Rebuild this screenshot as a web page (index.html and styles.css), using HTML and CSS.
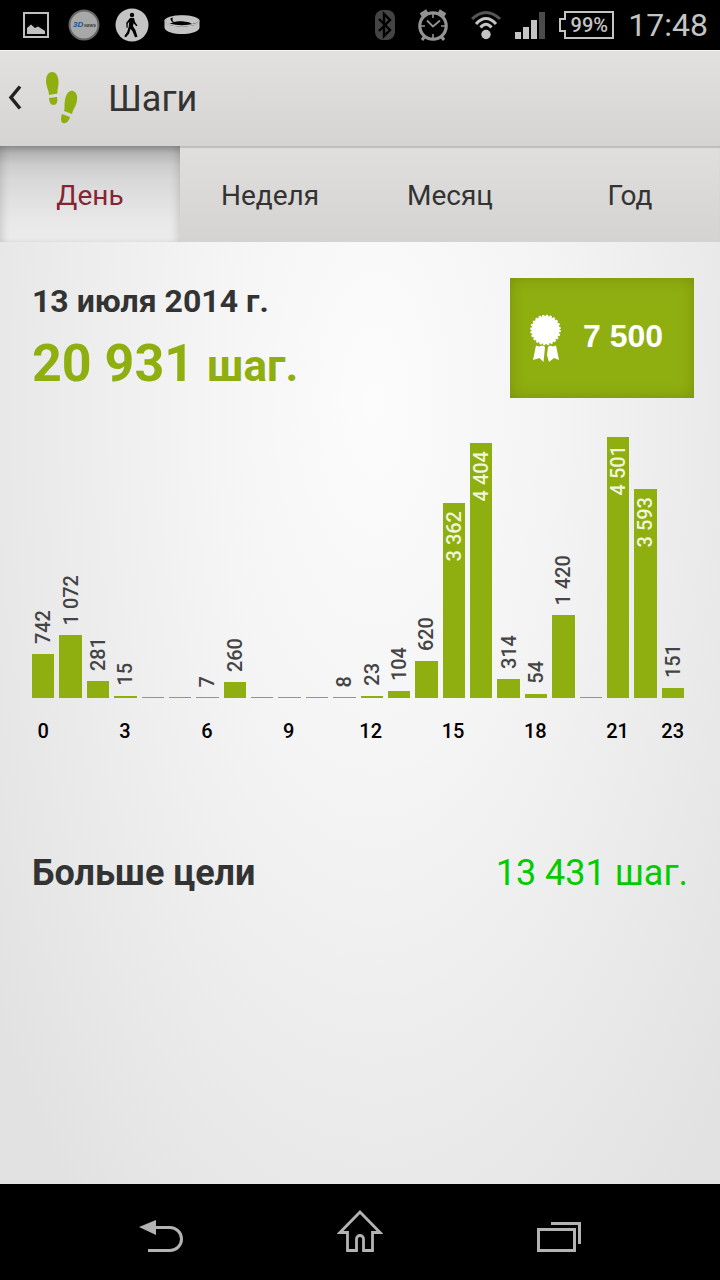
FILE: index.html
```html
<!DOCTYPE html>
<html lang="ru">
<head>
    <meta charset="UTF-8" />
    <meta name="viewport" content="width=device-width, initial-scale=1.0" />
    <title>Шаги</title>
    <link rel="stylesheet" href="styles.css">
</head>
<body>
    <div class="status-bar">
        <div class="status-group notifications">
            <svg width="26" height="26" viewBox="0 0 26 26">
                <rect x="1" y="1" width="24" height="24" fill="none" stroke="#c0c0c0" stroke-width="2" />
                <path d="M4 22v-6l4-3.500 4 3.500 3-1.500 4 2.500 3 2v3z" fill="#c0c0c0" />
            </svg>
            <svg width="32" height="32" viewBox="0 0 32 32">
                <circle cx="16" cy="16" r="14.500" fill="#a8a8a8" stroke="#666" stroke-width="2" />
                <text x="5" y="18" class="logo-3d">3D</text>
                <text x="16" y="18" class="logo-news">NEWS</text>
            </svg>
            <svg width="34" height="34" viewBox="0 0 34 34">
                <circle cx="17" cy="17" r="16.500" fill="#c4c4c4" />
                <circle cx="17" cy="7" r="2.200" />
                <path d="M15 10h4l1 4 2.500 3.500-1 .8-3-3-.5 3 2.500 4 2 6.500-2.500.5-2.500-6-2-2.500-1.500 5-3 3.500-1.800-1 3-4.500 1.500-5 .5-5-1.500 2v4h-1.200l-.2-5z" />
            </svg>
            <svg width="36" height="20" viewBox="0 0 36 20">
                <path d="M.5 7C5 13 31 13 35.500 7v6c-3 8-32 8-35 0z" fill="#c4c4c4" />
                <ellipse cx="18" cy="6" rx="17" ry="5" fill="none" stroke="#c4c4c4" stroke-width="1.500" />
                <path d="M10 1.500C17 0 34 1 34.500 6 34 7.500 31 8.500 28 9 25 6 14 5.500 10 7 8 6 8 3 10 1.500zM7 2C1 4 0 7 5 9l4-1.500C6.500 6 6 4 7 2z" fill="#c4c4c4" />
            </svg>
        </div>
        <div class="status-group indicators">
            <svg width="20" height="30" viewBox="0 0 20 30">
                <rect width="20" height="30" rx="8" fill="#444" />
                <path d="M4 9l11 11-6 6V4l6 6L4 21" fill="none" stroke="#000" stroke-width="2.400" />
            </svg>
            <svg width="30" height="32" viewBox="0 0 30 32" fill="none" stroke="#939393">
                <circle cx="15" cy="17" r="13.200" stroke-width="3.200" />
                <path d="M9 11.500l6 6 7-6" stroke-width="1.800" />
                <path d="M15 5v4M15 25v4M3 17h4M23 17h4" stroke-width="1.600" />
                <path d="M3 6.500l6.500-4M20.500 2.500l6.500 4" stroke-width="5" />
                <path d="M7 27l-3 4M23 27l3 4" stroke-width="3" />
            </svg>
            <svg width="30" height="30" viewBox="0 0 30 30" fill="none" stroke-width="3">
                <path d="M1 9Q15-4 29 9" stroke="#555" />
                <path d="M5 14Q15 3 25 14M9.500 17.500Q15 11 20.500 17.500" stroke="#c4c4c4" />
                <circle cx="15" cy="24.500" r="4.700" fill="#c4c4c4" />
            </svg>
            <svg width="30" height="28" viewBox="0 0 30 28">
                <path d="M0 21h6v7H0zM8 16h6v12H8zM16 9h6v19h-6z" fill="#c4c4c4" />
                <path d="M24 1h6v27h-6z" fill="#4b4b4b" />
            </svg>
            <div class="battery">
                <svg width="55" height="28" viewBox="0 0 55 28">
                    <path d="M6 1h48v26H6v-7H1V8h5z" fill="none" stroke="#c4c4c4" stroke-width="2" />
                </svg>
                <span>99%</span>
            </div>
            <span class="clock">17:48</span>
        </div>
    </div>

    <header class="header">
        <a href="#" class="back-link" aria-label="Назад">
            <svg width="14" height="28" viewBox="0 0 14 28">
                <path d="M12 1.500L3 12.500l9 11" fill="none" stroke="#222" stroke-width="3.500" />
            </svg>
            <svg width="34" height="54" viewBox="0 0 34 54" fill="#8fae10">
                <path d="M7 0c5 0 7 6 6.500 12-.3 4-1.500 7-1 9.500L4 23C4 18 1 15 1 9 1 4 3 0 7 0z" />
                <path d="M4 26l8-1c1 4 0 8-3.500 8S4.500 30 4 26z" />
                <path d="M28 19c4 1 5 6 3.500 12-1 4-4 7-4.500 11l-8-3c1-3 0-6 1-11 1-6 4-10 8-9z" />
                <path d="M17 42l8 3c-1 4-4 7-7 6s-2-6-1-9z" />
            </svg>
        </a>
        <h1>Шаги</h1>
    </header>

    <nav class="tabs">
        <button class="tab active">День</button>
        <button class="tab">Неделя</button>
        <button class="tab">Месяц</button>
        <button class="tab">Год</button>
    </nav>

    <main class="content">
        <section class="summary">
            <div>
                <h2 class="date">13 июля 2014 г.</h2>
                <p class="total">20 931 <span>шаг.</span></p>
            </div>
            <div class="goal">
                <svg width="32" height="50" viewBox="0 0 32 50" fill="#fff">
                    <circle cx="15.500" cy="17" r="14" />
                    <circle cx="15.500" cy="17" r="14.300" fill="none" stroke="#fff" stroke-width="2" stroke-dasharray="2.200 1.543" />
                    <path d="M6 32.500l3 1 4-1 2 1.500-1.500 15-4-4-6.500 2z" />
                    <path d="M18 34l2-1.500 3 1 3-1 3 14.500-5-2-5 4-2-7z" />
                </svg>
                <span>7 500</span>
            </div>
        </section>

        <section class="chart">
            <div class="bars"></div>
            <div class="axis"></div>
        </section>

        <section class="result">
            <h2>Больше цели</h2>
            <span class="over">13 431 шаг.</span>
        </section>
    </main>

    <footer class="nav-bar">
        <button aria-label="Назад">
            <svg width="44" height="44" viewBox="0 0 44 44">
                <path d="M16 17.500h15a11.500 11.500 0 0 1 0 23H9" fill="none" stroke="#b3b3b3" stroke-width="3" />
                <path d="M0 17L17 10v15z" fill="#b3b3b3" />
            </svg>
        </button>
        <button aria-label="Домой">
            <svg width="46" height="44" viewBox="0 0 46 44">
                <path d="M23 2L3 22.500h7.500v18H19.500V29a3.500 3.500 0 0 1 7 0v11.500h9v-18H43z" fill="none" stroke="#b3b3b3" stroke-width="2.800" />
            </svg>
        </button>
        <button aria-label="Недавние">
            <svg width="44" height="44" viewBox="0 0 44 44" fill="none" stroke="#b3b3b3" stroke-width="3">
                <path d="M1.500 19.500h36v21h-36zM14 13.500h28.500V34" />
            </svg>
        </button>
    </footer>

    <script>
        const steps = [742, 1072, 281, 15, 0, 0, 7, 260, 0, 0, 0, 8, 23, 104, 620, 3362, 4404, 314, 54, 1420, 0, 4501, 3593, 151];
        const chartHeight = 260;
        const maxSteps = Math.max(...steps);

        const bars = document.querySelector('.bars');
        const axis = document.querySelector('.axis');

        function formatSteps(value) {
            return String(value).replace(/(\d)(\d{3})$/, '$1 $2');
        }

        steps.forEach((value, hour) => {
            const bar = document.createElement('div');
            bar.className = 'bar';
            bar.style.height = Math.round(value / maxSteps * chartHeight) + 1 + 'px';

            if (value > 0) {
                const label = document.createElement('span');
                label.className = value > maxSteps / 2 ? 'bar-label inside' : 'bar-label';
                label.textContent = formatSteps(value);
                bar.appendChild(label);
            }
            bars.appendChild(bar);

            const tick = document.createElement('span');
            if (hour % 3 === 0 || hour === steps.length - 1) {
                tick.textContent = hour;
            }
            axis.appendChild(tick);
        });
    </script>
</body>
</html>
```
FILE: styles.css
```css
:root {
    --green: #8fae10;
    --text: #333;
    --icon: #c4c4c4;
}

* {
    margin: 0;
    padding: 0;
    box-sizing: border-box;
}

body {
    display: flex;
    flex-direction: column;
    min-height: 100vh;
    background: #000;
    color: var(--text);
    font-family: Roboto, "Noto Sans", sans-serif;
}

svg {
    display: block;
    flex-shrink: 0;
}

button {
    border: none;
    background: none;
    font-family: inherit;
    cursor: pointer;
}

.status-bar {
    display: flex;
    align-items: center;
    justify-content: space-between;
    height: 50px;
    padding: 0 12px 0 23px;
    background: #000;
}

.status-group {
    display: flex;
    align-items: center;
}

.notifications {
    gap: 15px;
}

.notifications svg:first-child {
    margin-right: 4px;
}

.indicators {
    gap: 14px;
}

.indicators > svg:first-child,
.indicators > svg:nth-child(2) {
    margin-right: 9px;
}

.battery {
    display: grid;
    align-items: center;
}

.battery svg,
.battery span {
    grid-area: 1 / 1;
}

.battery span {
    padding-left: 5px;
    text-align: center;
    color: var(--icon);
    font-size: 20px;
    font-weight: 500;
}

.clock {
    color: var(--icon);
    font-size: 32px;
    line-height: 50px;
}

.logo-3d,
.logo-news {
    font-family: "Liberation Sans", sans-serif;
    font-size: 8px;
    font-weight: bold;
    font-style: italic;
    fill: #0d5a9c;
}

.logo-news {
    font-size: 4px;
    fill: #333;
}

.header {
    display: flex;
    align-items: center;
    gap: 29px;
    height: 96px;
    padding: 2px 0 0 8px;
    background: linear-gradient(#e2e1df, #d5d4d2);
    box-shadow: inset 0 1px #f4f4f4;
}

.back-link {
    display: flex;
    align-items: center;
    gap: 23px;
}

.header h1 {
    font-size: 36px;
    font-weight: 400;
}

.tabs {
    display: grid;
    grid-template-columns: repeat(4, 1fr);
    height: 96px;
    background: linear-gradient(#e0dfdd, #d4d3d1);
    box-shadow: inset 0 2px 1px #bdbdbd;
}

.tab {
    padding-top: 2px;
    color: var(--text);
    font-size: 28px;
}

.tab.active {
    color: #872434;
    background: linear-gradient(#929292, #b5b5b5 8%, #cdcdcd 20%, #d8d8d8 35%, #e9e9e9 80%, #ebebeb);
    box-shadow: inset 6px 0 8px -4px rgba(0, 0, 0, 0.15), inset -6px 0 8px -4px rgba(0, 0, 0, 0.15);
}

.content {
    flex: 1;
    padding: 36px 32px;
    background: radial-gradient(ellipse 65% 110% at 52% 17%, #fcfcfc, #f4f4f4 38%, #e2e2e2);
}

.summary {
    display: flex;
    justify-content: space-between;
    margin-right: -6px;
}

.date {
    font-size: 32px;
    font-weight: 700;
    line-height: 46px;
}

.total {
    color: var(--green);
    font-size: 52px;
    font-weight: 700;
    line-height: 80px;
}

.total span {
    font-size: 44px;
}

.goal {
    display: flex;
    align-items: center;
    gap: 21px;
    width: 184px;
    height: 120px;
    padding-left: 20px;
    color: #fff;
    background: var(--green);
    box-shadow: inset 0 0 14px rgba(80, 90, 0, 0.35);
    font-family: "Liberation Sans", sans-serif;
    font-size: 32px;
    font-weight: 700;
}

.goal span {
    padding-bottom: 4px;
}

.chart {
    margin: 30px 4px 0 0;
}

.bars,
.axis {
    display: grid;
    grid-template-columns: repeat(24, 1fr);
    column-gap: 5px;
}

.bars {
    align-items: end;
    height: 262px;
}

.bar {
    position: relative;
    background: var(--green);
}

.bar-label {
    position: absolute;
    bottom: 100%;
    left: 50%;
    padding-top: 10px;
    color: #444;
    font-size: 20px;
    font-weight: 500;
    line-height: 26px;
    white-space: nowrap;
    writing-mode: vertical-rl;
    transform: translateX(-50%) rotate(180deg);
}

.bar-label.inside {
    top: 8px;
    bottom: auto;
    padding: 0;
    color: #f0f5dc;
}

.axis {
    padding-top: 20px;
    color: #000;
    font-size: 20px;
    font-weight: 500;
    line-height: 26px;
}

.axis span {
    display: flex;
    justify-content: center;
}

.result {
    display: flex;
    align-items: center;
    justify-content: space-between;
    margin-top: 106px;
    font-size: 36px;
    line-height: 46px;
}

.result h2 {
    font-size: 36px;
    font-weight: 700;
}

.over {
    color: #0c0;
}

.nav-bar {
    display: flex;
    align-items: center;
    justify-content: center;
    gap: 154px;
    height: 96px;
    background: #000;
}
```
